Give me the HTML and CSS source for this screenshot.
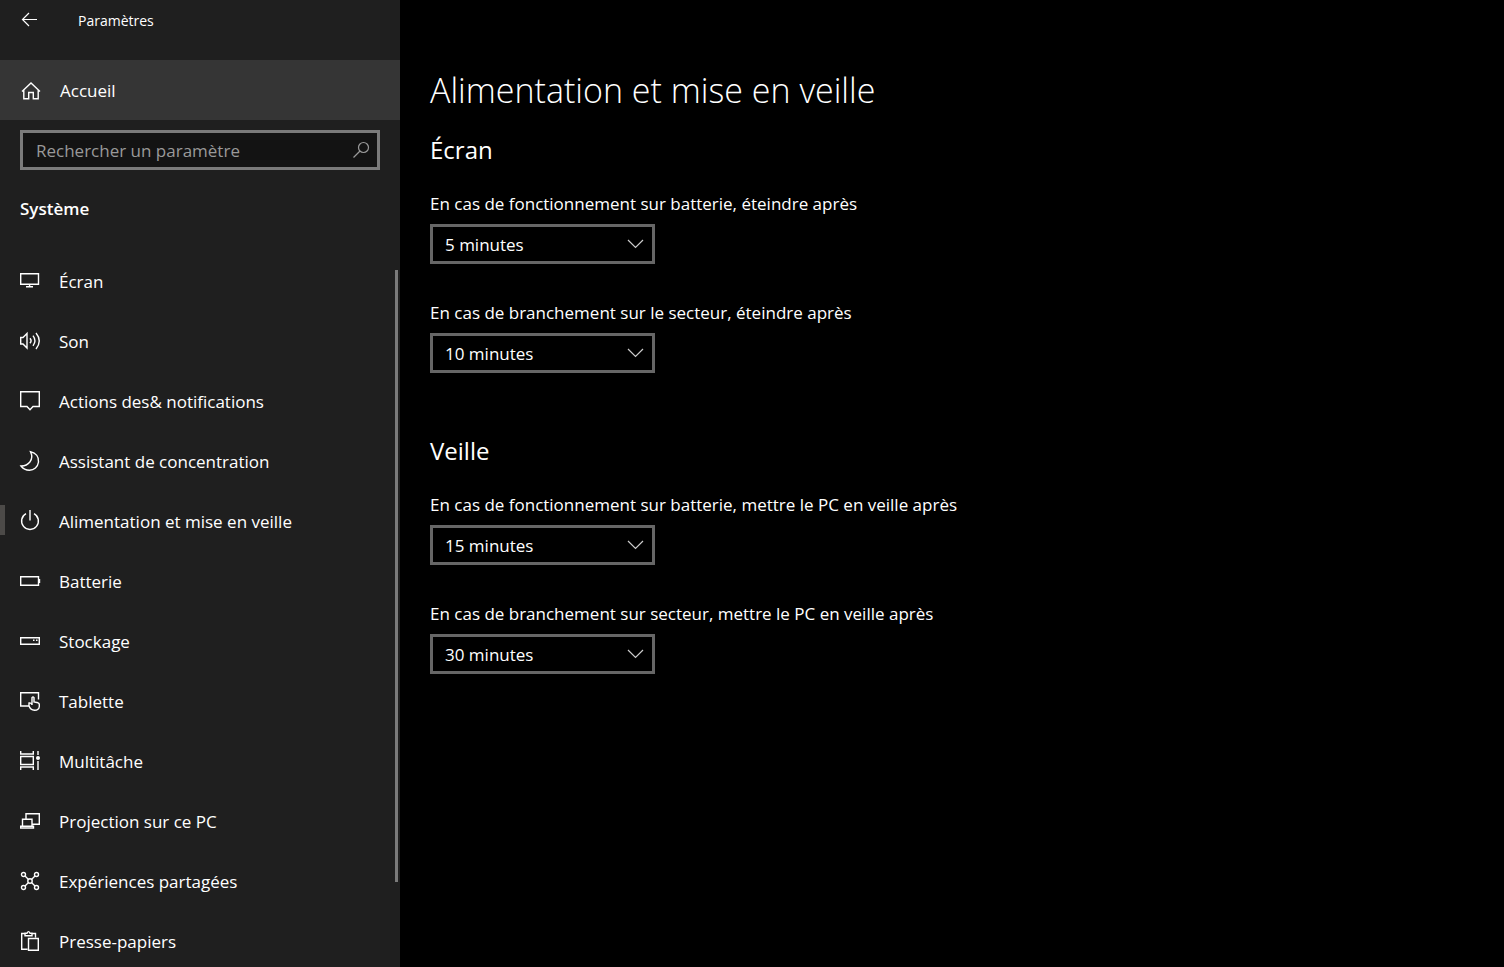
FILE: index.html
```html
<!DOCTYPE html>
<html lang="fr">
<head>
<meta charset="utf-8">
<meta name="viewport" content="width=device-width, initial-scale=1">
<title>Paramètres</title>
<link rel="stylesheet" href="styles.css">
</head>
<body>
<div class="app">
  <aside class="sidebar">
    <header class="titlebar">
      <button class="back" type="button" aria-label="Retour">
        <svg class="icon" viewBox="0 0 20 20"><path d="M17 9.500H2.500M9 3L2.500 9.500L9 16"/></svg>
      </button>
      <span class="app-name">Paramètres</span>
    </header>
    <a class="home" href="#accueil">
      <svg class="icon" viewBox="0 0 20 20"><path d="M2 10.500L11 2L20 10.500M3.800 9V17.800H8.700V11.500H13.300V17.800H18.200V9"/></svg>
      <span>Accueil</span>
    </a>
    <form class="search">
      <input class="search-input" type="search" aria-label="Rechercher un paramètre" placeholder="Rechercher un paramètre">
      <button class="search-button" type="submit" aria-label="Rechercher">
        <svg class="icon" viewBox="0 0 20 20"><circle cx="12.500" cy="7.500" r="5"/><path d="M9 11L2.500 17.500"/></svg>
      </button>
    </form>
    <h2 class="category">Système</h2>
    <div class="nav-area">
      <nav class="nav" aria-label="Système">
        <a class="nav-item" href="#ecran">
          <svg class="icon" viewBox="0 0 20 20"><path d="M.7 2.700H18.500V13.200H.7zM9.600 13.200V15.500M6 15.700H13"/></svg>
          <span>Écran</span>
        </a>
        <a class="nav-item" href="#son">
          <svg class="icon" viewBox="0 0 20 20"><path d="M.7 6.500H3L7 2.500V17L3 13H.7zM10 7.200Q12.200 9.800 10 12.300M13 4.700Q16.800 9.800 13 14.800M16 2Q22.500 9.800 16 18"/></svg>
          <span>Son</span>
        </a>
        <a class="nav-item" href="#notifications">
          <svg class="icon" viewBox="0 0 20 20"><path d="M.7.7H19.300V15.500H13L10 18.800L7 15.500H.7z"/></svg>
          <span>Actions des&amp; notifications</span>
        </a>
        <a class="nav-item" href="#concentration">
          <svg class="icon" viewBox="0 0 20 20"><path d="M10.500.8C16 2 19 6 18.500 11C17.800 16 14 19.200 9.500 19.200C6 19.200 3 17.800 1 15C8 15.200 14.500 9 10.500.8z"/></svg>
          <span>Assistant de concentration</span>
        </a>
        <a class="nav-item nav-item-active" href="#alimentation" aria-current="page">
          <svg class="icon" viewBox="0 0 20 20"><path d="M10-.9V9.500M6 2.700A8.400 8.400 0 1 0 14 2.700"/></svg>
          <span>Alimentation et mise en veille</span>
        </a>
        <a class="nav-item" href="#batterie">
          <svg class="icon" viewBox="0 0 20 20"><path d="M.7 5.700H18.500V14.300H.7zM19.500 8V12"/></svg>
          <span>Batterie</span>
        </a>
        <a class="nav-item" href="#stockage">
          <svg class="icon" viewBox="0 0 20 20"><path d="M.7 6.700H19.300V13.300H.7zM13 9.200H14.500M16 9.200H17.500"/></svg>
          <span>Stockage</span>
        </a>
        <a class="nav-item" href="#tablette">
          <svg class="icon" viewBox="0 0 20 20"><path d="M8.500 15H.7V1.700H18.500V8.500M12 14V6.700Q13 5 14 6.700V11L18 11.800Q19.300 12.200 19.300 13.500V15.500Q19 19.300 14.500 19.300Q10.500 19 9 15V12Q10.500 11.500 12 13.500"/></svg>
          <span>Tablette</span>
        </a>
        <a class="nav-item" href="#multitache">
          <svg class="icon" viewBox="0 0 20 20"><path d="M.7 0V3H13.300V0M.7 5.500H13.300V13.500H.7zM.7 19V16H13.300V19M18 0V4M18 10V19"/><circle class="icon-dot" cx="18" cy="7" r="2"/></svg>
          <span>Multitâche</span>
        </a>
        <a class="nav-item" href="#projection">
          <svg class="icon" viewBox="0 0 20 20"><path d="M6 8V2.700H19.300V13.200H12.500M2.500 15V8.200H12V15M.7 15.300H13.500V17H.7z"/></svg>
          <span>Projection sur ce PC</span>
        </a>
        <a class="nav-item" href="#experiences">
          <svg class="icon" viewBox="0 0 20 20"><circle cx="3.500" cy="3.500" r="2"/><circle cx="16.500" cy="3.500" r="2"/><circle cx="3.500" cy="16.500" r="2"/><circle cx="16.500" cy="16.500" r="2"/><circle cx="10" cy="10" r="2.200"/><path d="M5 5L8.500 8.500M15 5L11.500 8.500M5 15L8.500 11.500M15 15L11.500 11.500"/></svg>
          <span>Expériences partagées</span>
        </a>
        <a class="nav-item" href="#presse-papiers">
          <svg class="icon" viewBox="0 0 20 20"><path d="M7.500 18.300H1.700V2.500H5M12 2.500H15.500V6.500M5 4.800V2.200H7Q8.500-1 10 2.200H12V4.800zM8.500 7.500H18.300V19.300H8.500z"/></svg>
          <span>Presse-papiers</span>
        </a>
      </nav>
      <div class="scroll-thumb"></div>
    </div>
  </aside>

  <main class="content">
    <h1 class="page-title">Alimentation et mise en veille</h1>
    <section class="group">
      <h2 class="group-title">Écran</h2>
      <div class="field">
        <label for="screen-battery">En cas de fonctionnement sur batterie, éteindre après</label>
        <div class="dropdown">
          <select id="screen-battery"><option>5 minutes</option></select>
          <svg class="icon chevron" viewBox="0 0 20 20"><path d="M3 6L10.500 13.500L18 6"/></svg>
        </div>
      </div>
      <div class="field">
        <label for="screen-plugged">En cas de branchement sur le secteur, éteindre après</label>
        <div class="dropdown">
          <select id="screen-plugged"><option>10 minutes</option></select>
          <svg class="icon chevron" viewBox="0 0 20 20"><path d="M3 6L10.500 13.500L18 6"/></svg>
        </div>
      </div>
    </section>
    <section class="group">
      <h2 class="group-title">Veille</h2>
      <div class="field">
        <label for="sleep-battery">En cas de fonctionnement sur batterie, mettre le PC en veille après</label>
        <div class="dropdown">
          <select id="sleep-battery"><option>15 minutes</option></select>
          <svg class="icon chevron" viewBox="0 0 20 20"><path d="M3 6L10.500 13.500L18 6"/></svg>
        </div>
      </div>
      <div class="field">
        <label for="sleep-plugged">En cas de branchement sur secteur, mettre le PC en veille après</label>
        <div class="dropdown">
          <select id="sleep-plugged"><option>30 minutes</option></select>
          <svg class="icon chevron" viewBox="0 0 20 20"><path d="M3 6L10.500 13.500L18 6"/></svg>
        </div>
      </div>
    </section>
  </main>
</div>
</body>
</html>
```

FILE: styles.css
```css
* {
  box-sizing: border-box;
}

body {
  margin: 0;
  background: #000;
  color: #fff;
  font-family: "Open Sans", "Noto Sans", sans-serif;
  font-size: 17px;
  line-height: 24px;
}

h1,
h2 {
  margin: 0;
}

a {
  color: inherit;
  text-decoration: none;
}

button,
input,
select {
  margin: 0;
  border: 0;
  padding: 0;
  background: none;
  color: inherit;
  font: inherit;
  appearance: none;
}

.app {
  display: grid;
  grid-template-columns: 400px 1fr;
  height: 100vh;
}

.icon {
  flex: none;
  width: 20px;
  height: 20px;
  overflow: visible;
  fill: none;
  stroke: currentColor;
  stroke-width: 1.4;
}

.icon-dot {
  fill: currentColor;
  stroke: none;
}

/* Sidebar */

.sidebar {
  display: flex;
  flex-direction: column;
  min-height: 0;
  background: #1f1f1f;
}

.titlebar {
  display: flex;
  align-items: center;
  height: 40px;
  margin-bottom: 20px;
}

.back {
  display: flex;
  width: 58px;
  margin-right: 20px;
  padding-left: 20px;
}

.back .icon {
  stroke-width: 1.2;
}

.app-name {
  padding-top: 2px;
  font-size: 14px;
}

.home {
  display: flex;
  align-items: center;
  gap: 20px;
  height: 60px;
  padding: 2px 20px 0;
  background: #353535;
}

.search {
  display: flex;
  align-items: center;
  height: 40px;
  margin: 10px 20px 0;
  border: 3px solid #7a7a7a;
  padding: 0 6px 0 13px;
  background: #131313;
  color: #999;
}

.search-input {
  flex: 1;
  min-width: 0;
  padding-top: 2px;
  outline: 0;
}

.search-input::placeholder {
  color: #999;
  opacity: 1;
}

.search-button {
  display: flex;
}

.search-button .icon {
  stroke-width: 1.2;
}

.category {
  margin: 27px 20px 30px;
  font-size: 17px;
  font-weight: 600;
  line-height: 24px;
}

.nav-area {
  position: relative;
  flex: 1;
  min-height: 0;
}

.nav {
  height: 100%;
  overflow-y: auto;
  scrollbar-width: none;
}

.nav-item {
  display: flex;
  align-items: center;
  gap: 19px;
  height: 60px;
  padding: 0 20px;
}

.nav-item span {
  padding-top: 2px;
}

.nav-item-active {
  background: linear-gradient(#4c4a48, #4c4a48) 0 14px / 5px 30px no-repeat;
}

.scroll-thumb {
  position: absolute;
  top: 19px;
  right: 2px;
  width: 3px;
  height: 85.5%;
  background: #7a7a7a;
}

/* Content */

.content {
  min-width: 0;
  padding: 66px 30px 30px;
  overflow-y: auto;
}

.page-title {
  margin-bottom: 20px;
  font-size: 34px;
  font-weight: 350;
  line-height: 48px;
}

.group + .group {
  margin-top: 62px;
}

.group-title {
  margin-bottom: 26px;
  font-size: 24px;
  font-weight: 400;
  line-height: 32px;
}

.field {
  display: flex;
  flex-direction: column;
  align-items: flex-start;
  gap: 8px;
}

.field + .field {
  margin-top: 37px;
}

.dropdown {
  display: grid;
  align-items: center;
  width: 225px;
}

.dropdown > * {
  grid-area: 1 / 1;
}

.dropdown select {
  height: 40px;
  border: 3px solid #666;
  padding: 2px 40px 0 12px;
  background: #000;
}

.chevron {
  justify-self: end;
  margin-right: 10px;
  stroke: #ccc;
  stroke-width: 1.2;
  pointer-events: none;
}
```
